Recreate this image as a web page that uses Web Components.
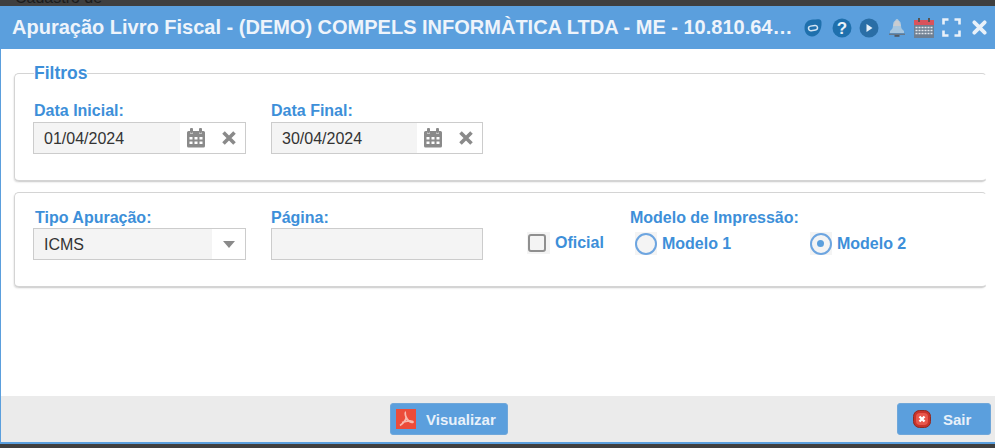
<!DOCTYPE html>
<html lang="pt-BR">
<head>
<meta charset="utf-8">
<title>Apuração Livro Fiscal</title>
<style>
    html, body { margin: 0; padding: 0; height: 100%; overflow: hidden; }
    body { font-family: "Liberation Sans", Arial, sans-serif; background: #3f3f3f; }
</style>
</head>
<body>
<app-window>
    <window-titlebar slot="titlebar" title-text="Apuração Livro Fiscal - (DEMO) COMPELS INFORMÀTICA LTDA - ME - 10.810.64…"></window-titlebar>

    <form-group legend="Filtros">
        <date-field label="Data Inicial:" value="01/04/2024" style="--box-width:213px;--label-indent:1px"></date-field>
        <date-field label="Data Final:" value="30/04/2024"></date-field>
    </form-group>

    <form-group style="--label-height:20px">
        <select-field label="Tipo Apuração:" value="ICMS" style="--box-width:213px;--label-indent:2px"></select-field>
        <text-field label="Página:"></text-field>
        <check-field label="Oficial"></check-field>
        <radio-group label="Modelo de Impressão:">
            <radio-field label="Modelo 1"></radio-field>
            <radio-field label="Modelo 2" checked></radio-field>
        </radio-group>
    </form-group>

    <action-button slot="footer" icon="pdf" label="Visualizar"></action-button>
    <action-button slot="footer" icon="exit" label="Sair"></action-button>
</app-window>

<script>
const FIELD_CSS = `
    .label {
        display: block;
        color: #3d8fd9;
        font-weight: bold;
        font-size: 16px;
        line-height: 19px;
        height: var(--label-height, 21px);
        padding-left: var(--label-indent, 0);
    }
    .box {
        box-sizing: border-box;
        height: 32px;
        width: var(--box-width, 212px);
        border: 1px solid #cccccc;
        background: #ffffff;
        display: flex;
        align-items: stretch;
    }
    .input {
        background: #f4f4f4;
        color: #333333;
        font-size: 16px;
        line-height: 31px;
        padding-left: 10px;
        flex: 1;
    }
`;

class AppWindow extends HTMLElement {
    constructor() {
        super();
        const shadowRoot = this.attachShadow({ mode: 'open' });
        shadowRoot.innerHTML = `
        <style>
            :host { display: flex; flex-direction: column; height: 448px; width: 995px; background: #3f3f3f; }
            .behind {
                height: 6px;
                overflow: hidden;
                padding-left: 15px;
                color: #1c1c1c;
                font-size: 16px;
                line-height: 6px;
            }
            .behind span { position: relative; top: -5px; }
            .window {
                height: 438px;
                display: flex;
                flex-direction: column;
                background: #ffffff;
                border-left: 1px solid #5b9fdd;
                border-bottom: 2px solid #5b9fdd;
                box-sizing: border-box;
            }
            .content { flex: 1; padding: 16px 8px 0 13px; display: flex; flex-direction: column; gap: 10px; }
            .footer {
                height: 46px;
                background: #ebebeb;
                display: flex;
                align-items: center;
                justify-content: space-between;
                padding: 0 4px 0 389px;
            }
        </style>
        <div class="behind"><span>Cadastro de</span></div>
        <div class="window">
            <slot name="titlebar"></slot>
            <div class="content"><slot></slot></div>
            <div class="footer"><slot name="footer"></slot></div>
        </div>
        `;
    }
}

class WindowTitlebar extends HTMLElement {
    constructor() {
        super();
        const shadowRoot = this.attachShadow({ mode: 'open' });
        shadowRoot.innerHTML = `
        <style>
            :host { display: flex; align-items: center; height: 43px; background: #5b9fdd; margin-left: -1px; padding: 0 6px 0 12px; }
            h1 {
                margin: 0;
                width: 782px;
                flex: none;
                white-space: nowrap;
                color: #eef4fb;
                font-size: 20px;
                font-weight: bold;
            }
            .icons { display: flex; align-items: center; margin-left: 10px; }
            svg { display: block; flex: none; }
        </style>
        <h1 id="title"></h1>
        <div class="icons">
            <svg width="18" height="20" viewBox="0 0 18 20" style="margin-right:10px">
                <path d="M9 1.500c3 0 8.500-1.500 8.500 2.500C18 12 14 18.500 8 18.500 3.500 18.500 .5 14.500 .5 10 .5 5 4 1.500 9 1.500z" fill="#1f70ad"/>
                <rect x="4.500" y="7.800" width="9" height="4.600" rx="2.300" fill="none" stroke="#d5e5f3" stroke-width="1.500" transform="rotate(-8 9 10)"/>
            </svg>
            <svg width="20" height="20" viewBox="0 0 20 20" style="margin-right:7px">
                <circle cx="10" cy="10" r="9.500" fill="#1f70ad"/>
                <text x="10" y="15.800" font-family="Liberation Sans" font-size="17" font-weight="bold" text-anchor="middle" fill="#e8f1f9">?</text>
            </svg>
            <svg width="20" height="20" viewBox="0 0 20 20" style="margin-right:9px">
                <circle cx="10" cy="10" r="9.500" fill="#2a6ea6"/>
                <path d="M7.500 6l6 4-6 4z" fill="#e8f1f9"/>
            </svg>
            <svg width="18" height="20" viewBox="0 0 18 20" style="margin-right:8px">
                <path d="M9 1c1 0 1.500.7 1.500 1.500 2 .8 2.500 2.500 2.500 5 0 2.500 1 4 3 5.500v2H2v-2c2-1.500 3-3 3-5.500s.5-4.200 2.500-5C7.500 1.700 8 1 9 1z" fill="#a6c6e0"/>
                <path d="M7.500 2.500h3L13 8H5z" fill="#c9ccd0"/>
                <rect x="1" y="15.500" width="16" height="1.500" fill="#67788a"/>
                <rect x="6.500" y="17" width="5" height="1.800" fill="#4f5a66"/>
            </svg>
            <svg width="20" height="20" viewBox="0 0 20 20" style="margin-right:8px">
                <rect x="0" y="2" width="20" height="18" fill="#6f7f92"/>
                <rect x="0" y="2" width="20" height="5" fill="#d9535c"/>
                <rect x="4" y="0" width="2" height="4" fill="#555555"/>
                <rect x="14" y="0" width="2" height="4" fill="#555555"/>
                <path d="M1.500 9.500h17M1.500 12.500h17M1.500 15.500h17" stroke="#e4e9ef" stroke-width="1.500" stroke-dasharray="2 1"/>
            </svg>
            <svg width="19" height="19" viewBox="0 0 19 19" style="margin-right:11px">
                <path d="M1.500 6.500v-5h5M12.500 1.500h5v5M17.500 12.500v5h-5M6.500 17.500h-5v-5" fill="none" stroke="#e9f1f9" stroke-width="2.600"/>
            </svg>
            <svg width="15" height="15" viewBox="0 0 16 16">
                <path d="M2.500 2.500l11 11M13.500 2.500l-11 11" stroke="#e9f1f9" stroke-width="4" stroke-linecap="round"/>
            </svg>
        </div>
        `;
        shadowRoot.getElementById('title').textContent = this.getAttribute('title-text');
    }
}

class FormGroup extends HTMLElement {
    constructor() {
        super();
        const shadowRoot = this.attachShadow({ mode: 'open' });
        shadowRoot.innerHTML = `
        <style>
            :host { display: block; }
            fieldset {
                box-sizing: border-box;
                width: 100%;
                margin: 0;
                min-width: 0;
                border: 1px solid #d4d4d4;
                border-right-color: #ffffff;
                border-bottom-width: 2px;
                border-radius: 5px;
                box-shadow: -1px 1px 2px -1px rgba(0,0,0,.2);
                padding: 0 0 0 18px;
                display: flex;
                align-items: flex-start;
                gap: 25px;
            }
            legend {
                padding: 0;
                margin-left: 1px;
                color: #3d8fd9;
                font-size: 17.5px;
                font-weight: bold;
                line-height: 17px;
            }
            fieldset.plain { height: 96px; padding-top: 15px; }
            fieldset.titled { height: 117px; padding-top: 19px; }
        </style>
        <fieldset id="box"><slot></slot></fieldset>
        `;
        const box = shadowRoot.getElementById('box');
        if (this.hasAttribute('legend')) {
            const legend = document.createElement('legend');
            legend.textContent = this.getAttribute('legend');
            box.prepend(legend);
            box.className = 'titled';
        } else {
            box.className = 'plain';
        }
    }
}

class DateField extends HTMLElement {
    constructor() {
        super();
        const shadowRoot = this.attachShadow({ mode: 'open' });
        shadowRoot.innerHTML = `
        <style>
            ${FIELD_CSS}
            :host { display: block; }
            .btn { display: flex; align-items: center; justify-content: center; flex: none; }
            svg { display: block; }
        </style>
        <span class="label" id="label"></span>
        <div class="box">
            <div class="input" id="value"></div>
            <div class="btn" style="width:32px">
                <svg width="18" height="20" viewBox="0 0 18 20" fill="#8a8a8a">
                    <rect x="3" y="0" width="3" height="5" rx="1"/>
                    <rect x="12" y="0" width="3" height="5" rx="1"/>
                    <path d="M1.500 3H3v2.500h3V3h6v2.500h3V3h1.500A1.500 1.500 0 0 1 18 4.500V18a1.500 1.500 0 0 1-1.500 1.500h-15A1.500 1.500 0 0 1 0 18V4.500A1.500 1.500 0 0 1 1.500 3z"/>
                    <g fill="#ffffff">
                        <rect x="2.500" y="9" width="3" height="2.500"/><rect x="7.500" y="9" width="3" height="2.500"/><rect x="12.500" y="9" width="3" height="2.500"/>
                        <rect x="2.500" y="13.500" width="3" height="2.500"/><rect x="7.500" y="13.500" width="3" height="2.500"/><rect x="12.500" y="13.500" width="3" height="2.500"/>
                    </g>
                </svg>
            </div>
            <div class="btn" style="width:33px">
                <svg width="16" height="16" viewBox="0 0 16 16">
                    <path d="M2.500 2.500l11 11M13.500 2.500l-11 11" stroke="#8a8a8a" stroke-width="3.600"/>
                </svg>
            </div>
        </div>
        `;
        shadowRoot.getElementById('label').textContent = this.getAttribute('label');
        shadowRoot.getElementById('value').textContent = this.getAttribute('value');
    }
}

class SelectField extends HTMLElement {
    constructor() {
        super();
        const shadowRoot = this.attachShadow({ mode: 'open' });
        shadowRoot.innerHTML = `
        <style>
            ${FIELD_CSS}
            :host { display: block; }
            .arrow { width: 33px; display: flex; align-items: center; justify-content: center; flex: none; }
            .arrow i { border: 6.500px solid transparent; border-top: 7px solid #8a8a8a; border-bottom: 0; }
        </style>
        <span class="label" id="label"></span>
        <div class="box">
            <div class="input" id="value"></div>
            <div class="arrow"><i></i></div>
        </div>
        `;
        shadowRoot.getElementById('label').textContent = this.getAttribute('label');
        shadowRoot.getElementById('value').textContent = this.getAttribute('value');
    }
}

class TextField extends HTMLElement {
    constructor() {
        super();
        const shadowRoot = this.attachShadow({ mode: 'open' });
        shadowRoot.innerHTML = `
        <style>
            ${FIELD_CSS}
            :host { display: block; }
        </style>
        <span class="label" id="label"></span>
        <div class="box"><div class="input"></div></div>
        `;
        shadowRoot.getElementById('label').textContent = this.getAttribute('label');
    }
}

class CheckField extends HTMLElement {
    constructor() {
        super();
        const shadowRoot = this.attachShadow({ mode: 'open' });
        shadowRoot.innerHTML = `
        <style>
            :host { display: flex; align-items: center; gap: 5px; margin: 24px 0 0 19px; color: #3d8fd9; font-weight: bold; font-size: 16px; }
            .wrap { width: 23px; height: 22px; box-sizing: border-box; padding-left: 1px; background: #f4f4f4; display: flex; align-items: center; }
            i { box-sizing: border-box; width: 18px; height: 18px; border: 2px solid #8f8f8f; border-radius: 3px; display: block; }
        </style>
        <span class="wrap"><i></i></span><span id="label"></span>
        `;
        shadowRoot.getElementById('label').textContent = this.getAttribute('label');
    }
}

class RadioGroup extends HTMLElement {
    constructor() {
        super();
        const shadowRoot = this.attachShadow({ mode: 'open' });
        shadowRoot.innerHTML = `
        <style>
            ${FIELD_CSS}
            :host { display: block; margin-left: 1px; }
            .label { height: 24px; }
            .row { display: flex; padding-left: 5px; }
        </style>
        <span class="label" id="label"></span>
        <div class="row"><slot></slot></div>
        `;
        shadowRoot.getElementById('label').textContent = this.getAttribute('label');
    }
}

class RadioField extends HTMLElement {
    constructor() {
        super();
        const shadowRoot = this.attachShadow({ mode: 'open' });
        shadowRoot.innerHTML = `
        <style>
            :host { display: flex; align-items: center; gap: 5px; width: 175px; color: #3d8fd9; font-weight: bold; font-size: 16px; }
            .wrap { width: 22px; height: 23px; background: #f4f4f4; display: flex; align-items: center; justify-content: center; }
            i { box-sizing: border-box; width: 22px; height: 22px; border: 2px solid #6da5e0; border-radius: 50%; display: flex; align-items: center; justify-content: center; background: #f4f4f4; }
            b { display: none; width: 7px; height: 7px; border-radius: 50%; background: #5b9fdd; }
            :host([checked]) b { display: block; }
        </style>
        <span class="wrap"><i><b></b></i></span><span id="label"></span>
        `;
        shadowRoot.getElementById('label').textContent = this.getAttribute('label');
    }
}

class ActionButton extends HTMLElement {
    constructor() {
        super();
        const shadowRoot = this.attachShadow({ mode: 'open' });
        const icons = {
            pdf: `<svg width="20" height="20" viewBox="0 0 20 20">
                    <rect width="20" height="20" fill="#ec4c3a"/>
                    <path d="M10 3c-1 0-1 2 0 5 .5 2-2 6-6 8.500M10 8c1.500 3 4 5 6 5.500 1.500.2 1.500-1.500-.5-1.500-3-.3-7 .5-9.500 1.500" fill="none" stroke="#f8b9ae" stroke-width="1.700"/>
                </svg>`,
            exit: `<svg width="18" height="18" viewBox="0 0 18 18">
                    <rect x="0.500" y="0.500" width="17" height="17" rx="6" fill="#c8332b" stroke="#8e2a22"/>
                    <rect x="3" y="3" width="12" height="12" rx="4" fill="#e8574c"/>
                    <path d="M6.500 6.500l5 5M11.500 6.500l-5 5" stroke="#ffffff" stroke-width="2.400"/>
                </svg>`
        };
        shadowRoot.innerHTML = `
        <style>
            :host { display: block; }
            button {
                box-sizing: border-box;
                height: 32px;
                border: 1px solid #6fa7da;
                border-radius: 3px;
                background: #5b9fdd;
                color: #e8f1fa;
                font: bold 15px "Liberation Sans", Arial, sans-serif;
                display: flex;
                align-items: center;
                padding: 0;
            }
            button.pdf { width: 118px; padding-left: 5px; gap: 10px; }
            button.exit { width: 94px; padding-left: 15px; gap: 12px; }
            svg { display: block; flex: none; }
        </style>
        <button class="${this.getAttribute('icon')}">${icons[this.getAttribute('icon')]}<span id="label"></span></button>
        `;
        shadowRoot.getElementById('label').textContent = this.getAttribute('label');
    }
}

window.customElements.define('app-window', AppWindow);
window.customElements.define('window-titlebar', WindowTitlebar);
window.customElements.define('form-group', FormGroup);
window.customElements.define('date-field', DateField);
window.customElements.define('select-field', SelectField);
window.customElements.define('text-field', TextField);
window.customElements.define('check-field', CheckField);
window.customElements.define('radio-group', RadioGroup);
window.customElements.define('radio-field', RadioField);
window.customElements.define('action-button', ActionButton);
</script>
</body>
</html>
